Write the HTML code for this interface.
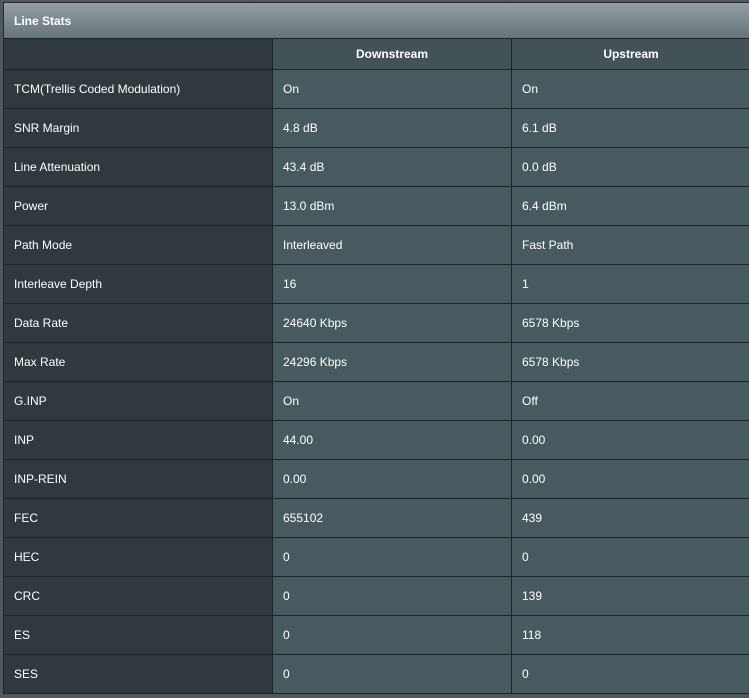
<!DOCTYPE html>
<html><head><style>
html,body{margin:0;padding:0;width:749px;height:698px;background:#4f595d;overflow:hidden;font-family:"Liberation Sans",Arial,sans-serif;}
.wrap{position:absolute;left:3px;top:2px;width:746px;}
.hd{height:35px;border:1px solid #262b2e;border-right:none;border-bottom:none;background:linear-gradient(#949fa4,#65747b);color:#fff;font-weight:bold;font-size:12px;line-height:36px;padding-left:10px;}
table{border-collapse:collapse;width:747px;table-layout:fixed;}
td{border:1px solid #1f2426;color:#fff;font-size:12px;padding:0 0 0 10px;height:38px;}
tr.h td{height:30px;background:#435257;font-weight:bold;text-align:center;padding:0;}
tr.h td:first-child{background:#2f393e;}
td.l{background:#2f393e;}
td.v{background:#475a60;}
</style></head><body>
<div class="wrap">
<div class="hd">Line Stats</div>
<table>
<colgroup><col style="width:269px"><col style="width:239px"><col style="width:239px"></colgroup>
<tr class="h"><td></td><td>Downstream</td><td>Upstream</td></tr>
<tr><td class="l">TCM(Trellis Coded Modulation)</td><td class="v">On</td><td class="v">On</td></tr>
<tr><td class="l">SNR Margin</td><td class="v">4.8 dB</td><td class="v">6.1 dB</td></tr>
<tr><td class="l">Line Attenuation</td><td class="v">43.4 dB</td><td class="v">0.0 dB</td></tr>
<tr><td class="l">Power</td><td class="v">13.0 dBm</td><td class="v">6.4 dBm</td></tr>
<tr><td class="l">Path Mode</td><td class="v">Interleaved</td><td class="v">Fast Path</td></tr>
<tr><td class="l">Interleave Depth</td><td class="v">16</td><td class="v">1</td></tr>
<tr><td class="l">Data Rate</td><td class="v">24640 Kbps</td><td class="v">6578 Kbps</td></tr>
<tr><td class="l">Max Rate</td><td class="v">24296 Kbps</td><td class="v">6578 Kbps</td></tr>
<tr><td class="l">G.INP</td><td class="v">On</td><td class="v">Off</td></tr>
<tr><td class="l">INP</td><td class="v">44.00</td><td class="v">0.00</td></tr>
<tr><td class="l">INP-REIN</td><td class="v">0.00</td><td class="v">0.00</td></tr>
<tr><td class="l">FEC</td><td class="v">655102</td><td class="v">439</td></tr>
<tr><td class="l">HEC</td><td class="v">0</td><td class="v">0</td></tr>
<tr><td class="l">CRC</td><td class="v">0</td><td class="v">139</td></tr>
<tr><td class="l">ES</td><td class="v">0</td><td class="v">118</td></tr>
<tr><td class="l">SES</td><td class="v">0</td><td class="v">0</td></tr>
</table>
</div>
</body></html>
